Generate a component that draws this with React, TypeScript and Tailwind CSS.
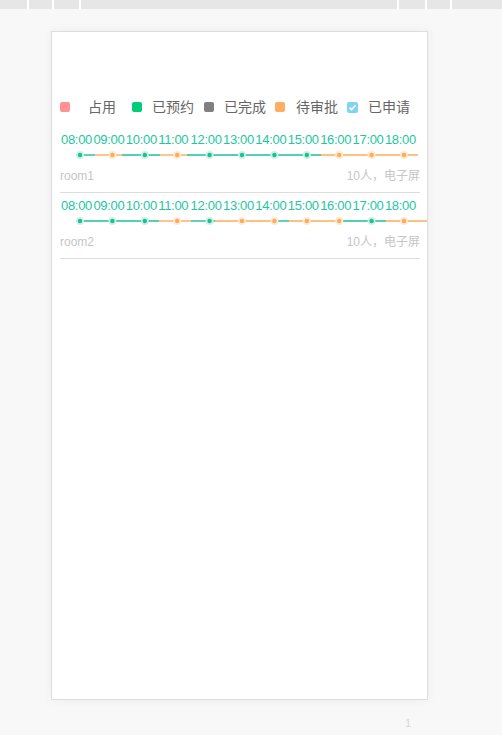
import React from "react";

const times = ["08:00","09:00","10:00","11:00","12:00","13:00","14:00","15:00","16:00","17:00","18:00"];
const G = "#1dbf97";
const O = "#ffab58";
const GH = "#cdf1e6";
const OH = "#ffe9d3";

type Seg = [number, number, string];
const rows: { name: string; segs: Seg[]; dots: string }[] = [
  {
    name: "room1",
    segs: [[20,35,G],[35,62,O],[62,100,G],[100,127,O],[127,261,G],[261,358,O]],
    dots: "gogoggggooo",
  },
  {
    name: "room2",
    segs: [[20,99,G],[99,131,O],[131,155,G],[155,212,O],[212,229,G],[229,280,O],[280,326,G],[326,367,O]],
    dots: "gggogoooogo",
  },
];

function Line({ segs, dots }: { segs: Seg[]; dots: string }) {
  return (
    <svg width="367" height="10" className="block overflow-visible">
      {segs.map(([a, b, c], i) => (
        <line key={i} x1={a} x2={b} y1={5} y2={5} stroke={c} strokeWidth={1.4} />
      ))}
      {dots.split("").map((d, i) => (
        <g key={i}>
          <circle cx={20 + 32.4 * i} cy={5} r={4} fill={d === "g" ? GH : OH} />
          <circle cx={20 + 32.4 * i} cy={5} r={2.2} fill={d === "g" ? G : O} />
        </g>
      ))}
    </svg>
  );
}

export default function App() {
  return (
    <div
      className="min-h-[735px] bg-[#f8f8f8]"
      style={{ fontFamily: '"Liberation Sans", "Noto Sans CJK SC", sans-serif' }}
    >
      <div className="flex h-[9px] gap-[2px] bg-white">
        <div className="w-[27px] bg-[#e6e6e6]" />
        <div className="w-[23px] bg-[#e6e6e6]" />
        <div className="w-[25px] bg-[#e6e6e6]" />
        <div className="w-[316px] bg-[#e6e6e6]" />
        <div className="w-[26px] bg-[#e6e6e6]" />
        <div className="w-[23px] bg-[#e6e6e6]" />
        <div className="flex-1 bg-[#e6e6e6]" />
      </div>

      <div className="ml-[51px] mt-[22px] h-[669px] w-[377px] border border-[#dedede] bg-white pl-[8px] pt-[65px] shadow-[0_0_10px_rgba(0,0,0,0.05)]">
        <div className="flex h-[20px] items-center text-[14px] text-[#666]">
          <span className="h-[10px] w-[10px] rounded-[2px] bg-[#ff9393]" />
          <span className="ml-[18px]">占用</span>
          <span className="ml-[16px] h-[10px] w-[10px] rounded-[2px] bg-[#00cc7a]" />
          <span className="ml-[10px]">已预约</span>
          <span className="ml-[10px] h-[10px] w-[10px] rounded-[2px] bg-[#808080]" />
          <span className="ml-[10px]">已完成</span>
          <span className="ml-[9px] h-[10px] w-[10px] rounded-[2px] bg-[#ffad60]" />
          <span className="ml-[11px]">待审批</span>
          <span className="ml-[9px] flex h-[11px] w-[11px] items-center justify-center rounded-[2px] bg-[#7fd4f3]">
            <svg width="9" height="9" viewBox="0 0 9 9">
              <path d="M1.5 4.6 L3.6 6.6 L7.6 2.2" fill="none" stroke="#fff" strokeWidth="1.6" />
            </svg>
          </span>
          <span className="ml-[10px]">已申请</span>
        </div>

        <div className="mt-[10px]">
          {rows.map((r) => (
            <div key={r.name} className="h-[66px] w-[360px] border-b border-[#dddddd] pt-[5px]">
              <div className="flex h-[16px] pl-[1px] text-[13px] leading-[16px] tracking-[-0.3px] text-[#1ec6a1]">
                {times.map((t) => (
                  <span key={t} className="w-[32.4px] shrink-0 whitespace-nowrap">{t}</span>
                ))}
              </div>
              <div className="mt-[2px] h-[10px]">
                <Line segs={r.segs} dots={r.dots} />
              </div>
              <div className="mt-[8px] flex h-[16px] items-center justify-between text-[12px] text-[#c6c6c6]">
                <span>{r.name}</span>
                <span>10人，电子屏</span>
              </div>
            </div>
          ))}
        </div>
      </div>

      <div className="pl-[405px] pt-[16px] text-[11px] leading-[14px] text-[#d8d8d8]">1</div>
    </div>
  );
}
